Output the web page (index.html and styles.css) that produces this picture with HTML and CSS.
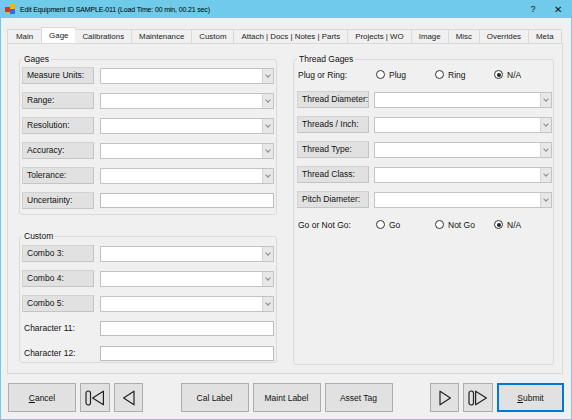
FILE: index.html
```html
<!DOCTYPE html>
<html lang="en">
<head>
  <meta charset="UTF-8" />
  <title>Edit Equipment ID SAMPLE-011</title>
  <link rel="stylesheet" href="styles.css">
</head>
<body>
  <div class="window">

    <div class="titlebar">
      <svg class="app-icon" width="11" height="11" viewBox="0 0 11 11">
        <rect x="0" y="3" width="5" height="5" fill="#d9342b" />
        <rect x="5" y="0" width="5" height="5" fill="#f2b705" />
        <rect x="5" y="5" width="5" height="5" fill="#2f6fd0" />
        <rect x="1" y="8" width="3" height="2" fill="#f2b705" />
      </svg>
      <span class="title">Edit Equipment ID SAMPLE-011 (Load Time: 00 min, 00.21 sec)</span>
      <span class="tb-btn">?</span>
      <span class="tb-btn close">✕</span>
    </div>

    <div class="client">
      <div class="tabs">
        <div class="tab">Main</div>
        <div class="tab active">Gage</div>
        <div class="tab">Calibrations</div>
        <div class="tab">Maintenance</div>
        <div class="tab">Custom</div>
        <div class="tab">Attach | Docs | Notes | Parts</div>
        <div class="tab">Projects | WO</div>
        <div class="tab">Image</div>
        <div class="tab">Misc</div>
        <div class="tab">Overrides</div>
        <div class="tab">Meta</div>
      </div>

      <div class="panel">
        <div class="col left">
          <fieldset class="group gages">
            <legend>Gages</legend>
            <div class="row"><span class="lbl">Measure Units:</span><span class="combo"><i class="drop"></i></span></div>
            <div class="row"><span class="lbl">Range:</span><span class="combo"><i class="drop"></i></span></div>
            <div class="row"><span class="lbl">Resolution:</span><span class="combo"><i class="drop"></i></span></div>
            <div class="row"><span class="lbl">Accuracy:</span><span class="combo"><i class="drop"></i></span></div>
            <div class="row"><span class="lbl">Tolerance:</span><span class="combo"><i class="drop"></i></span></div>
            <div class="row"><span class="lbl">Uncertainty:</span><span class="textbox"></span></div>
          </fieldset>

          <fieldset class="group custom">
            <legend>Custom</legend>
            <div class="row"><span class="lbl">Combo 3:</span><span class="combo"><i class="drop"></i></span></div>
            <div class="row"><span class="lbl">Combo 4:</span><span class="combo"><i class="drop"></i></span></div>
            <div class="row"><span class="lbl">Combo 5:</span><span class="combo"><i class="drop"></i></span></div>
            <div class="row"><span class="lbl plain">Character 11:</span><span class="textbox"></span></div>
            <div class="row"><span class="lbl plain">Character 12:</span><span class="textbox"></span></div>
          </fieldset>
        </div>

        <div class="col right">
          <fieldset class="group thread">
            <legend>Thread Gages</legend>
            <div class="radio-row">
              <span>Plug or Ring:</span>
              <label class="radio"><i class="dot"></i>Plug</label>
              <label class="radio"><i class="dot"></i>Ring</label>
              <label class="radio"><i class="dot on"></i>N/A</label>
            </div>
            <div class="row"><span class="lbl">Thread Diameter:</span><span class="combo"><i class="drop"></i></span></div>
            <div class="row"><span class="lbl">Threads / Inch:</span><span class="combo"><i class="drop"></i></span></div>
            <div class="row"><span class="lbl">Thread Type:</span><span class="combo"><i class="drop"></i></span></div>
            <div class="row"><span class="lbl">Thread Class:</span><span class="combo"><i class="drop"></i></span></div>
            <div class="row"><span class="lbl">Pitch Diameter:</span><span class="combo"><i class="drop"></i></span></div>
            <div class="radio-row go">
              <span>Go or Not Go:</span>
              <label class="radio"><i class="dot"></i>Go</label>
              <label class="radio"><i class="dot"></i>Not Go</label>
              <label class="radio"><i class="dot on"></i>N/A</label>
            </div>
          </fieldset>
        </div>
      </div>

      <div class="buttons">
        <div class="btn-group">
          <button class="btn wide"><u>C</u>ancel</button>
          <button class="btn nav">
            <svg width="20" height="16" viewBox="0 0 20 16">
              <rect x="1" y="1" width="4.5" height="14" rx="2.2" fill="none" stroke="#222" stroke-width="1.2" />
              <path d="M18.4 1.2 L7.6 8 L18.4 14.8 Z" fill="none" stroke="#222" stroke-width="1.2" stroke-linejoin="round" />
            </svg>
          </button>
          <button class="btn nav narrow">
            <svg width="14" height="16" viewBox="0 0 14 16">
              <path d="M12 1.2 L1.6 8 L12 14.8 Z" fill="none" stroke="#222" stroke-width="1.2" stroke-linejoin="round" />
            </svg>
          </button>
        </div>

        <div class="btn-group">
          <button class="btn wide">Cal Label</button>
          <button class="btn wide">Maint Label</button>
          <button class="btn wide">Asset Tag</button>
        </div>

        <div class="btn-group">
          <button class="btn nav narrow">
            <svg width="14" height="16" viewBox="0 0 14 16">
              <path d="M2 1.2 L12.4 8 L2 14.8 Z" fill="none" stroke="#222" stroke-width="1.2" stroke-linejoin="round" />
            </svg>
          </button>
          <button class="btn nav">
            <svg width="20" height="16" viewBox="0 0 20 16">
              <rect x="1" y="1" width="4.5" height="14" rx="2.2" fill="none" stroke="#222" stroke-width="1.2" />
              <path d="M7.6 1.2 L18.4 8 L7.6 14.8 Z" fill="none" stroke="#222" stroke-width="1.2" stroke-linejoin="round" />
            </svg>
          </button>
          <button class="btn wide default"><u>S</u>ubmit</button>
        </div>
      </div>
    </div>

  </div>
</body>
</html>
```

FILE: styles.css
```css
body {
  margin: 0;
  padding: 0;
  font-family: 'Liberation Sans', Arial, sans-serif;
  font-size: 8.5px;
  color: #111;
  background: #f0f0f0;
}

.window {
  width: 572px;
  height: 420px;
  box-sizing: border-box;
  border: 1px solid #6fcbe9;
  border-top: none;
  display: flex;
  flex-direction: column;
  background: #f0f0f0;
}

/* title bar */
.titlebar {
  height: 18px;
  margin: 0 -1px;
  background: #6fcbe9;
  display: flex;
  align-items: center;
  padding: 0 4px 0 5px;
}

.app-icon { margin-right: 4px; }

.title {
  flex: 1;
  font-size: 7px;
  letter-spacing: -0.15px;
  color: #000;
}

.tb-btn {
  font-size: 9px;
  color: #111;
  width: 22px;
  text-align: center;
}

.tb-btn.close { font-size: 10px; width: 20px; margin-left: 4px; }

.client {
  flex: 1;
  display: flex;
  flex-direction: column;
  padding: 9px 8px 0 6px;
}

/* tabs */
.tabs {
  display: flex;
  align-items: flex-end;
  height: 16px;
  position: relative;
  z-index: 1;
  overflow: hidden;
}

.tab {
  height: 13px;
  line-height: 13px;
  padding: 0 7px;
  border: 1px solid #d9d9d9;
  border-bottom: none;
  border-left: none;
  background: #f0f0f0;
  font-size: 7.9px;
  color: #222;
  white-space: nowrap;
}

.tab:first-child { border-left: 1px solid #d9d9d9; padding: 0 8px; }

.tab.active {
  height: 16px;
  line-height: 15px;
  background: #fff;
  border: 1px solid #d9d9d9;
  border-bottom: none;
  margin: 0 -1px -1px -1px;
  padding: 0 7px;
}

.panel {
  height: 331px;
  border: 1px solid #d9d9d9;
  background: #f0f0f0;
  display: flex;
  padding: 10px 0 0 11px;
  box-sizing: border-box;
}

.col { display: flex; flex-direction: column; }
.col.left { width: 258px; margin-right: 16px; }
.col.right { width: 261px; }

/* group boxes */
.group {
  margin: 0;
  border: 1px solid #dadada;
  border-radius: 3px;
  padding: 3px 2px 0 2px;
}

.group legend {
  padding: 0 2px;
  margin-left: 0;
  font-size: 8.5px;
}

.gages { height: 161px; box-sizing: border-box; }
.custom { margin-top: 16px; height: 132px; box-sizing: border-box; padding-top: 4px; }
.thread { height: 311px; box-sizing: border-box; padding-left: 3px; padding-right: 1px; }

.row {
  display: flex;
  align-items: center;
  height: 17px;
  margin-bottom: 8px;
}

.lbl {
  width: 72px;
  height: 17px;
  box-sizing: border-box;
  line-height: 15px;
  padding-left: 4px;
  background: #e1e1e1;
  border: 1px solid #c4c4c4;
  border-top-color: #d2d2d2;
  border-left-color: #d2d2d2;
  margin-right: 5px;
  white-space: nowrap;
  flex: none;
}

.left .lbl { margin-right: 6px; }

.lbl.plain {
  background: none;
  border-color: transparent;
  padding-left: 1px;
}

.combo,
.textbox {
  flex: 1;
  height: 16px;
  box-sizing: border-box;
  background: #fff;
  border: 1px solid #c3c3c3;
  position: relative;
}

.textbox { height: 15px; border-color: #bcbcbc; }

.drop {
  position: absolute;
  right: 0;
  top: 0;
  bottom: 0;
  width: 10px;
  background: #e8e8e8;
  border-left: 1px solid #d4d4d4;
}

.drop::after {
  content: "";
  position: absolute;
  left: 3px;
  top: 4px;
  width: 3px;
  height: 3px;
  border-right: 1px solid #8a8a8a;
  border-bottom: 1px solid #8a8a8a;
  transform: rotate(45deg);
}

/* radio rows */
.radio-row {
  display: grid;
  grid-template-columns: 78px 59px 59px auto;
  align-items: center;
  height: 17px;
  margin: -1px 0 8px 1px;
}

.radio-row.go { margin-top: 0; }

.radio {
  display: flex;
  align-items: center;
}

.dot {
  width: 9px;
  height: 9px;
  box-sizing: border-box;
  border: 1px solid #333;
  border-radius: 50%;
  background: #fff;
  margin-right: 4px;
  position: relative;
}

.dot.on::after {
  content: "";
  position: absolute;
  left: 1.5px;
  top: 1.5px;
  width: 4px;
  height: 4px;
  border-radius: 50%;
  background: #222;
}

/* bottom buttons */
.buttons {
  display: flex;
  justify-content: space-between;
  margin: 9px -1px 0 1px;
}

.btn-group { display: flex; gap: 4px; }

.btn {
  height: 29px;
  box-sizing: border-box;
  background: #e1e1e1;
  border: 1px solid #adadad;
  font-family: 'Liberation Sans', Arial, sans-serif;
  font-size: 8.5px;
  color: #111;
  padding: 0;
  display: flex;
  align-items: center;
  justify-content: center;
}

.btn.wide { width: 68px; }
.btn.nav { width: 30px; }
.btn.nav.narrow { width: 29px; }

.btn.default {
  width: 67px;
  border-color: #0078d7;
  box-shadow: inset 0 0 0 1px #0078d7;
}
```
